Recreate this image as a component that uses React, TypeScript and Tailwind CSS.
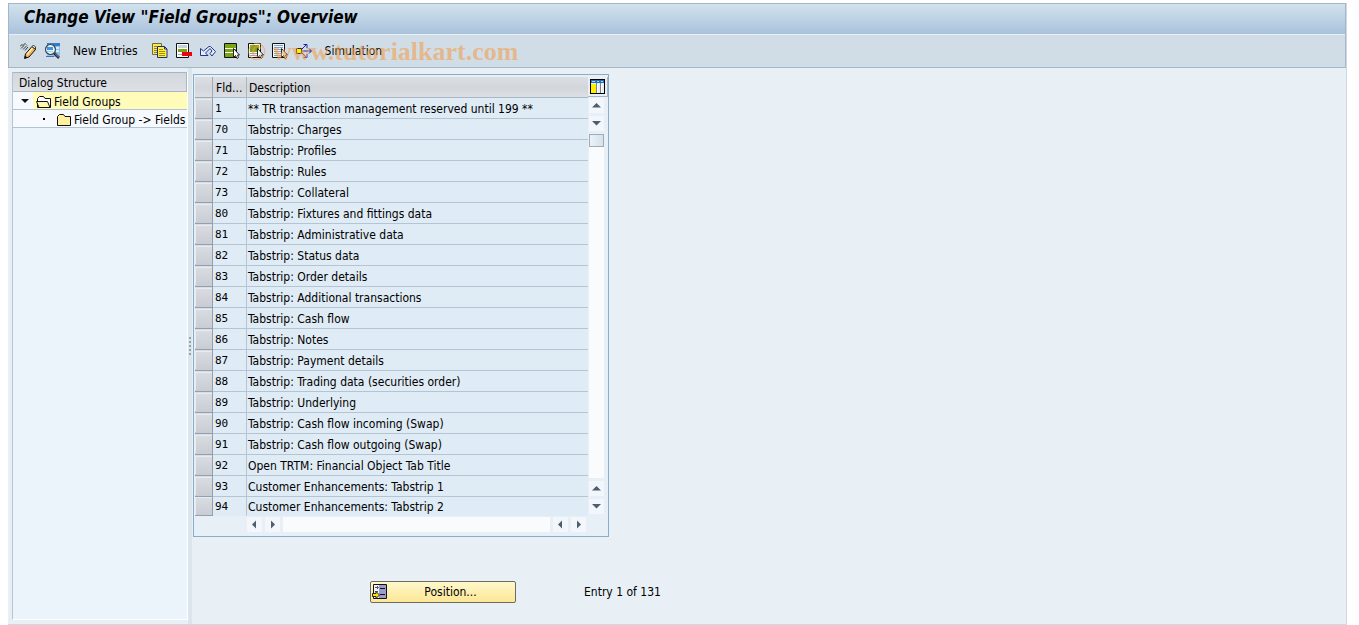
import { useState } from "react";
import type { ReactNode } from "react";

const rows = [
  { id: "1", desc: "** TR transaction management reserved until 199 **" },
  { id: "70", desc: "Tabstrip: Charges" },
  { id: "71", desc: "Tabstrip: Profiles" },
  { id: "72", desc: "Tabstrip: Rules" },
  { id: "73", desc: "Tabstrip: Collateral" },
  { id: "80", desc: "Tabstrip: Fixtures and fittings data" },
  { id: "81", desc: "Tabstrip: Administrative data" },
  { id: "82", desc: "Tabstrip: Status data" },
  { id: "83", desc: "Tabstrip: Order details" },
  { id: "84", desc: "Tabstrip: Additional transactions" },
  { id: "85", desc: "Tabstrip: Cash flow" },
  { id: "86", desc: "Tabstrip: Notes" },
  { id: "87", desc: "Tabstrip: Payment details" },
  { id: "88", desc: "Tabstrip: Trading data (securities order)" },
  { id: "89", desc: "Tabstrip: Underlying" },
  { id: "90", desc: "Tabstrip: Cash flow incoming (Swap)" },
  { id: "91", desc: "Tabstrip: Cash flow outgoing (Swap)" },
  { id: "92", desc: "Open TRTM: Financial Object Tab Title" },
  { id: "93", desc: "Customer Enhancements: Tabstrip 1" },
  { id: "94", desc: "Customer Enhancements: Tabstrip 2" },
];

function Icon({ children }: { children: ReactNode }) {
  return (
    <svg viewBox="0 0 16 16" className="block size-4 shrink-0" fill="none" aria-hidden="true">
      {children}
    </svg>
  );
}

function PencilIcon() {
  return (
    <Icon>
      <path d="M0 3.500 2 1.500l1 1 2-2 1 1M1 5.500l3-3M3 6.500l4-4M5 7.500 8 4" stroke="#222" strokeWidth=".9" />
      <path d="M4.500 15.500 5.500 11 12 3.500l3.500 3L9 14z" fill="#f7b553" stroke="#111" />
      <path d="M7 11.500 12.500 5" stroke="#fff2b0" strokeWidth="1.400" />
      <path d="m12 3.500 1.500-1.500 2 2V6.500z" fill="#e6e9f2" stroke="#111" strokeWidth=".8" />
      <path d="M4.500 15.500 5 12.500 7.500 14.500z" fill="#111" />
    </Icon>
  );
}

function FindIcon() {
  return (
    <Icon>
      <path d="M3 0h13v14H3z" fill="#8fc0ea" />
      <path d="M3 0h13v3H3z" fill="#2f7fc8" />
      <path d="M11 4h4v2h-4zM11 7h4v2h-4z" fill="#d9ebf9" />
      <path d="m10 10 5 5" stroke="#222a38" strokeWidth="2.500" />
      <path d="m11 10.500 4 4" stroke="#a9b4c8" strokeWidth=".8" />
      <circle cx="6.500" cy="6.500" r="5" fill="#e3f3fd" stroke="#3b4554" strokeWidth="1.200" />
      <path d="M3 4h6v3H3z" fill="#3f96dc" />
      <path d="M3 8h6v1H3z" fill="#a4d0f0" />
      <path d="M2 13.500h8" stroke="#4770a8" />
    </Icon>
  );
}

function CopyIcon() {
  return (
    <Icon>
      <path d="M.5.5h9v11h-9z" fill="#ffe94a" stroke="#6d6948" />
      <path d="M2 3.500h3M2 5.500h3M2 7.500h3M2 9.500h3" stroke="#8b8430" />
      <path d="M5.500 3.500h7l2.500 2.500v8.500H5.500z" fill="#fff22d" stroke="#1b2a99" />
      <path d="M12.500 3.500V6H15" stroke="#1b2a99" />
      <path d="M7 6.500h4M7 8.500h6M7 10.500h6M7 12.500h6" stroke="#a08c12" />
    </Icon>
  );
}

function DeleteRowIcon() {
  return (
    <Icon>
      <path d="M.5.500h12v14H.500z" fill="#fff" stroke="#111" />
      <path d="M2 2h9v3H2z" fill="#c5cee0" />
      <path d="M2 6h9v3H2z" fill="#79a514" />
      <path d="M2 11.500h9" stroke="#9aaac5" />
      <path d="M6 9h10v4H6z" fill="#e80410" />
    </Icon>
  );
}

function UndoIcon() {
  return (
    <Icon>
      <path d="M.5 5.500v7H8L5.500 10 10 5.500 12 8l-2 2.500 2 2.500 3.500-4.500-5-5H9L3.500 8z" fill="#e4edf9" stroke="#26358c" />
    </Icon>
  );
}

function Cursor() {
  return <path d="M9.500 5.500v9l2-2 1.500 3 1.500-1-1-2.500h2z" fill="#fff" stroke="#111" strokeWidth=".9" />;
}

function SelectAllIcon() {
  return (
    <Icon>
      <path d="M.5.500h12v14H.500z" fill="#fff" stroke="#111" />
      <path d="M1 1h11v4H1zM1 6h11v3H1zM1 10h11v4H1z" fill="#78a415" />
      <Cursor />
    </Icon>
  );
}

function SelectBlockIcon() {
  return (
    <Icon>
      <path d="M.5.500h12v14H.500z" fill="#fff" stroke="#111" />
      <path d="M2 2h9v7H2z" fill="#78a415" />
      <path d="M2 10.500h9M2 12.500h9" stroke="#8ca3bd" />
      <Cursor />
    </Icon>
  );
}

function DeselectIcon() {
  return (
    <Icon>
      <path d="M.5.500h12v14H.500z" fill="#f3f8fc" stroke="#111" />
      <path d="M2 2.500h9M2 4.500h9M2 6.500h9M2 8.500h9M2 10.500h9M2 12.500h9" stroke="#7fa1bd" />
      <Cursor />
    </Icon>
  );
}

function SimulationIcon() {
  return (
    <Icon>
      <path d="M5 8h10M5 7l5.500-5.500M5 9l5.500 5.500M7.500 1.500h3.500V5M7.500 14.500h3.500V11M13 5.500 15.500 8 13 10.500" stroke="#1d249c" />
      <path d="M.5 5.500h5v5h-5z" fill="#fff000" stroke="#222" />
    </Icon>
  );
}

function FolderIcon({ open = false }: { open?: boolean }) {
  return (
    <svg viewBox="0 0 16 14" className="block h-3.5 w-4 shrink-0" aria-hidden="true">
      <path d="M1.500 12.500v-9l2-2h4l1.500 2h5.500v9z" fill={open ? "#fff" : "#fff0a0"} stroke="#111" />
      {open && <path d="M3 12.500.500 6.500h11l2.500 6z" fill="#fff7b0" stroke="#111" />}
    </svg>
  );
}

function LayoutIcon() {
  return (
    <svg viewBox="0 0 15 15" className="block size-[15px]" shapeRendering="crispEdges" aria-hidden="true">
      <path d="M0 0h15v15H0z" fill="#000" />
      <path d="M1 1h13v13H1z" fill="#e8eef4" />
      <path d="M1 1h13v3H1z" fill="#1f72b5" />
      <path d="M2 2h3v1H2zM7 2h2v1H7zM11 2h2v1h-2z" fill="#a9d3f3" />
      <path d="M1 5h5v9H1z" fill="#ffee00" />
      <path d="M6 4h1v10H6zM10 4h1v10h-1z" fill="#77838f" />
      <path d="M7 5h1v9H7zM11 5h1v9h-1z" fill="#fff" />
    </svg>
  );
}

function PositionIcon() {
  return (
    <svg viewBox="0 0 16 16" className="block size-4" aria-hidden="true">
      <path d="M1.500.500h13v14h-13z" fill="#eef2fa" stroke="#111" />
      <path d="M7 1h7v13H7z" fill="#9a9ccc" />
      <path d="M8 4.500h5M8 10.500h5" stroke="#111" />
      <path d="M3 3.500h3M5 2l1.500 1.500L5 5M3 7.500h3" stroke="#556" fill="none" />
      <path d="M.500 9.500H4v-2L7.500 11 4 14.500v-2H.500z" fill="#ffe600" stroke="#222" />
    </svg>
  );
}

const arrows = {
  up: "M7.500 5 12 9.500H3z",
  down: "M7.500 9.500 3 5h9z",
  left: "M5 7.500 9 3.500v8z",
  right: "M10 7.500 6 3.500v8z",
};

function ScrollButton({ dir }: { dir: keyof typeof arrows }) {
  return (
    <button type="button" aria-label={`Scroll ${dir}`} className="size-[15px] shrink-0 bg-[#f3f6fa]">
      <svg viewBox="0 0 15 15" className="block size-[15px]">
        <path d={arrows[dir]} fill="#4d5f6e" />
      </svg>
    </button>
  );
}

const tools = [
  { label: "Copy As", icon: <CopyIcon /> },
  { label: "Delete", icon: <DeleteRowIcon /> },
  { label: "Undo Change", icon: <UndoIcon /> },
  { label: "Select All", icon: <SelectAllIcon /> },
  { label: "Select Block", icon: <SelectBlockIcon /> },
  { label: "Deselect All", icon: <DeselectIcon /> },
];

export default function App() {
  const [selected, setSelected] = useState<string | null>(null);

  return (
    <div className="min-h-screen bg-white pt-[3px] pr-3 pl-2 font-['DejaVu_Sans_Condensed','DejaVu_Sans',sans-serif] text-xs text-black">
      <div className="flex min-h-[calc(100vh-3px)] flex-col border-r border-b border-[#cdd7e6] bg-[#e8f0f6]">
        {/* Title and toolbar */}
        <header className="relative border border-[#a3b7c9] bg-[#d0dde7]">
          <h1 className="h-[30px] bg-linear-to-b from-[#d2e2ed] to-[#a9c2dc] pl-[15px] text-[17px] leading-[26px] font-bold italic">
            Change View "Field Groups": Overview
          </h1>
          <div className="flex h-[33px] items-center gap-2 border-t border-[#e9f1f6] pl-[11px]">
            <button type="button" aria-label="Display/Change"><PencilIcon /></button>
            <button type="button" aria-label="Find"><FindIcon /></button>
            <button type="button" className="mr-1.5 ml-[5px]">New Entries</button>
            {tools.map((t) => (
              <button key={t.label} type="button" aria-label={t.label}>{t.icon}</button>
            ))}
            <button type="button" className="flex items-center gap-[13px]"><SimulationIcon />Simulation</button>
          </div>
          <span className="pointer-events-none absolute top-[34px] left-[238px] font-['Liberation_Serif',serif] text-[26px] leading-7 font-bold whitespace-nowrap text-[#f0a050]/60">
            © www.tutorialkart.com
          </span>
        </header>

        <div className="flex flex-1">
          {/* Dialog structure tree */}
          <aside className="mt-1 mb-1 ml-1 w-44 shrink-0 border-r border-b border-l border-r-white border-b-white border-l-[#b8c4d6] bg-[#ebf3fb]">
            <h2 className="h-5 border border-l-0 border-[#a9b5c2] bg-linear-to-b from-[#d3d8de] to-[#dde0e4] pl-1.5 leading-5">Dialog Structure</h2>
            <ul>
              <li className="flex h-[18px] items-center border-b border-[#b3c3d2] bg-[#f6faff]">
                <span className="flex w-5 justify-center pl-1">
                  <svg viewBox="0 0 8 4" className="h-1 w-2"><path d="M0 0h8L4 4z" fill="#111" /></svg>
                </span>
                <a href="#groups" className="flex h-full flex-1 items-center gap-0.5 bg-[#fffbb8] pt-0.5 pl-[3px]">
                  <FolderIcon open />Field Groups
                </a>
              </li>
              <li className="flex h-[18px] items-center border-b border-[#b3c3d2] bg-[#f6faff] pl-[30px]">
                <span className="size-0.5 bg-black" />
                <a href="#fields" className="flex items-center gap-0.5 pt-0.5 pl-[11px] whitespace-nowrap">
                  <FolderIcon />Field Group -&gt; Fields
                </a>
              </li>
            </ul>
          </aside>

          <div className="flex w-1 shrink-0 items-center justify-center bg-[#dbe5ec]">
            <div className="h-[18px] border-l-2 border-dotted border-[#94a3b2]" />
          </div>

          <main className="flex-1 pt-1.5 pl-px">
            <div className="w-[416px] border border-[#8aaccb] bg-[#e8f0f7] pt-0.5 pl-px">
              <div className="flex">
                <table className="w-[393px] table-fixed border-separate border-spacing-0">
                  <colgroup>
                    <col className="w-[18px]" />
                    <col className="w-[34px]" />
                    <col />
                  </colgroup>
                  <thead>
                    <tr className="h-[21px] bg-linear-to-b from-[#dcdfe3] via-[#d2d5da] to-[#dde1e5] text-left">
                      <th aria-label="Select" className="border-r border-b border-[#9dabb9] p-0" />
                      <th className="border-r border-b border-[#a9b7c5] p-0 pt-0.5 pl-[3px] font-normal">Fld...</th>
                      <th className="border-b border-[#a9b7c5] p-0 pt-0.5 pl-0.5 font-normal">Description</th>
                    </tr>
                  </thead>
                  <tbody>
                    {rows.map((row) => (
                      <tr key={row.id} className="group h-[21px] bg-[#dfebf5] last:h-[19px]">
                        <td className="border-r border-b border-[#929fb0] bg-linear-to-b from-[#dadde2] to-[#c9cdd3] p-0">
                          <button
                            type="button"
                            aria-label={`Select row ${row.id}`}
                            aria-pressed={selected === row.id}
                            onClick={() => setSelected(selected === row.id ? null : row.id)}
                            className="block h-[18px] w-full border-t border-l border-[#e9ebee] aria-pressed:bg-[#f7d56b]"
                          />
                        </td>
                        <td className="border-r border-b border-[#b5c4d2] p-0 pt-0.5 pl-0.5 font-['DejaVu_Sans_Mono',monospace] text-[11px] leading-4 group-last:border-b-transparent">{row.id}</td>
                        <td className="border-b border-[#b5c4d2] p-0 pt-0.5 pl-px leading-4 whitespace-nowrap group-last:border-b-transparent">{row.desc}</td>
                      </tr>
                    ))}
                  </tbody>
                </table>

                <div className="flex flex-1 flex-col items-center">
                  <button type="button" aria-label="Configuration" className="flex h-5 w-full items-center justify-center border-r border-b border-[#a9b5c2]">
                    <LayoutIcon />
                  </button>
                  <div className="mt-px mr-1 flex flex-1 flex-col items-center gap-[3px] pb-0.5">
                    <ScrollButton dir="up" />
                    <ScrollButton dir="down" />
                    <div className="flex w-[15px] flex-1 flex-col bg-[#fafbfc]">
                      <div className="h-[13px] border border-[#9eabb9] bg-linear-to-r from-[#edf2f7] to-[#d5e1ec]" />
                    </div>
                    <ScrollButton dir="up" />
                    <ScrollButton dir="down" />
                  </div>
                </div>
              </div>

              <div className="flex h-5 items-start gap-[3px] pt-px pr-[22px] pl-[52px]">
                <ScrollButton dir="left" />
                <ScrollButton dir="right" />
                <div className="h-[15px] flex-1 bg-[#fafbfc]" />
                <ScrollButton dir="left" />
                <ScrollButton dir="right" />
              </div>
            </div>

            <div className="mt-11 flex items-center pl-[177px]">
              <button type="button" className="flex h-[22px] w-[146px] items-center rounded-xs border border-[#6e6c62] bg-linear-to-b from-[#fff8cc] to-[#fce794] pl-px">
                <PositionIcon />
                <span className="flex-1 pr-0.5">Position...</span>
              </button>
              <p className="pl-[68px]">Entry 1 of 131</p>
            </div>
          </main>
        </div>
      </div>
    </div>
  );
}
